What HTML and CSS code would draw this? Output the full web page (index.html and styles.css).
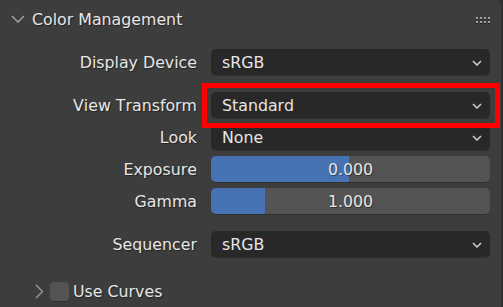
FILE: index.html
```html
<!DOCTYPE html>
<html>
<head>
<meta charset="utf-8">
<link rel="stylesheet" href="styles.css">
</head>
<body>
<div class="panel">
  <div class="header">
    <svg class="hchev" width="14" height="8" viewBox="0 0 14 8"><polyline points="1,1 7,7 13,1" fill="none" stroke="#a8a8a8" stroke-width="1.4"/></svg>
    <span class="title">Color Management</span>
    <span class="grip"><i></i><i></i><i></i><i></i><i></i><i></i><i></i><i></i></span>
  </div>
  <div class="props">
    <div class="group">
      <div class="row">
        <span class="label">Display Device</span>
        <div class="field menu"><span>sRGB</span><svg class="dchev" width="10" height="6" viewBox="0 0 10 6"><polyline points="1,1 5,5 9,1" fill="none" stroke="#d0d0d0" stroke-width="1.5"/></svg></div>
      </div>
    </div>
    <div class="group">
      <div class="row">
        <span class="label">View Transform</span>
        <div class="field menu"><span>Standard</span><svg class="dchev" width="10" height="6" viewBox="0 0 10 6"><polyline points="1,1 5,5 9,1" fill="none" stroke="#d0d0d0" stroke-width="1.5"/></svg></div>
      </div>
      <div class="row">
        <span class="label">Look</span>
        <div class="field menu"><span>None</span><svg class="dchev" width="10" height="6" viewBox="0 0 10 6"><polyline points="1,1 5,5 9,1" fill="none" stroke="#d0d0d0" stroke-width="1.5"/></svg></div>
      </div>
      <div class="row">
        <span class="label">Exposure</span>
        <div class="field slider"><div class="fill" style="width:49.5%"></div><span class="val">0.000</span></div>
      </div>
      <div class="row">
        <span class="label">Gamma</span>
        <div class="field slider"><div class="fill" style="width:19.4%"></div><span class="val">1.000</span></div>
      </div>
    </div>
    <div class="group">
      <div class="row">
        <span class="label">Sequencer</span>
        <div class="field menu"><span>sRGB</span><svg class="dchev" width="10" height="6" viewBox="0 0 10 6"><polyline points="1,1 5,5 9,1" fill="none" stroke="#d0d0d0" stroke-width="1.5"/></svg></div>
      </div>
    </div>
  </div>
  <div class="sub">
    <svg class="rchev" width="9" height="15" viewBox="0 0 9 15"><polyline points="1,1 7.5,7.5 1,14" fill="none" stroke="#9a9a9a" stroke-width="1.4"/></svg>
    <span class="check"></span>
    <span class="sublabel">Use Curves</span>
  </div>
  <div class="highlight"></div>
</div>
</body>
</html>
```
FILE: styles.css
```css
html, body {
  margin: 0;
  padding: 0;
}
body {
  width: 503px;
  height: 307px;
  overflow: hidden;
  background: #303030;
  font-family: "DejaVu Sans", sans-serif;
  font-size: 15.8px;
  font-kerning: none;
  color: #e6e6e6;
}
.panel {
  position: relative;
  width: 501px;
  height: 307px;
  background: #3d3d3d;
  border-top-right-radius: 5px;
}
.header {
  height: 38px;
  display: flex;
  align-items: center;
}
.hchev {
  margin-left: 11px;
  margin-right: 7px;
}
.title {
  flex: 1;
  text-shadow: 1px 1px 1px rgba(0,0,0,0.45);
}
.grip {
  display: grid;
  grid-template-columns: repeat(4, 2px);
  grid-template-rows: repeat(2, 2px);
  gap: 2px;
  margin-right: 11px;
  margin-top: 1px;
}
.grip i {
  display: block;
  width: 2px;
  height: 2px;
  background: #a0a0a0;
  box-shadow: 0 1px 0 #1e1e1e;
}
.props {
  padding-top: 11px;
  display: flex;
  flex-direction: column;
  gap: 17px;
}
.group {
  display: flex;
  flex-direction: column;
  gap: 6px;
}
.row {
  display: grid;
  grid-template-columns: 197px 279px;
  column-gap: 14px;
  height: 26px;
  align-items: center;
}
.label {
  text-align: right;
  white-space: nowrap;
  text-shadow: 1px 1px 1px rgba(0,0,0,0.45);
}
.field {
  position: relative;
  height: 26px;
  border-radius: 5px;
  box-shadow: 0 1px 0 rgba(0,0,0,0.22);
  overflow: hidden;
  display: flex;
  align-items: center;
}
.menu {
  background: #282828;
  padding: 0 8px 0 11px;
  justify-content: space-between;
}
.dchev {
  margin-top: 1px;
}
.slider {
  background: #545454;
  justify-content: center;
}
.fill {
  position: absolute;
  left: 0;
  top: 0;
  bottom: 0;
  background: #4772b3;
}
.val {
  position: relative;
  text-shadow: 1px 1px 1px rgba(0,0,0,0.45);
}
.sub {
  margin-top: 21px;
  height: 26px;
  display: flex;
  align-items: center;
}
.rchev {
  margin-left: 35px;
  margin-right: 6px;
}
.check {
  width: 19px;
  height: 19px;
  border-radius: 4px;
  background: #545454;
  box-shadow: 0 1px 0 rgba(0,0,0,0.2);
  margin-right: 4px;
}
.sublabel {
  text-shadow: 1px 1px 1px rgba(0,0,0,0.45);
}
.highlight {
  position: absolute;
  left: 202px;
  top: 83px;
  width: 298px;
  height: 45px;
  box-sizing: border-box;
  border: 5px solid #ff0000;
}
```
